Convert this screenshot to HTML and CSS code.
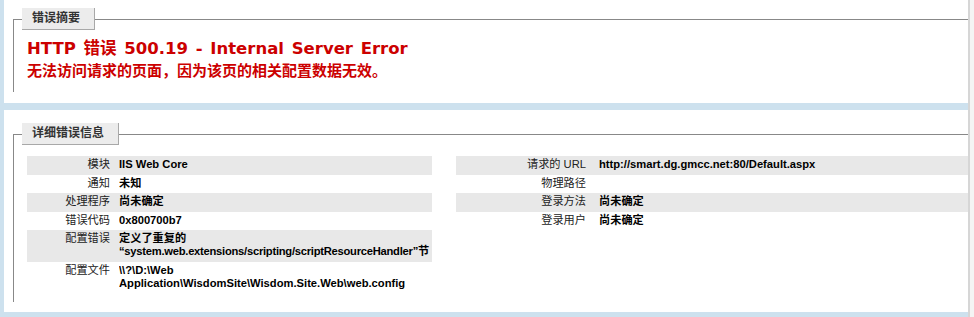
FILE: index.html
```html
<!DOCTYPE html>
<html lang="zh-CN">
<head>
  <meta charset="UTF-8" />
  <title>IIS 8.5 详细错误 - 500.19 - Internal Server Error</title>
  <meta name="viewport" content="width=device-width, initial-scale=1.0" />
  <link rel="stylesheet" href="styles.css">
</head>
<body>
  <!-- 错误摘要 -->
  <div class="box summary">
    <fieldset>
      <legend>错误摘要</legend>
      <h2>HTTP 错误 500.19 - Internal Server Error</h2>
      <h3>无法访问请求的页面，因为该页的相关配置数据无效。</h3>
    </fieldset>
  </div>

  <!-- 详细错误信息 -->
  <div class="box details">
    <fieldset>
      <legend>详细错误信息</legend>
      <div class="columns">
        <div class="col-left">
          <table>
            <tr class="alt"><th>模块</th><td>IIS Web Core</td></tr>
            <tr><th>通知</th><td>未知</td></tr>
            <tr class="alt"><th>处理程序</th><td>尚未确定</td></tr>
            <tr><th>错误代码</th><td>0x800700b7</td></tr>
            <tr class="alt"><th>配置错误</th><td>定义了重复的<br><span class="long">“system.web.extensions/scripting/scriptResourceHandler”节</span></td></tr>
            <tr><th>配置文件</th><td>\\?\D:\Web Application\WisdomSite\Wisdom.Site.Web\web.config</td></tr>
          </table>
        </div>
        <div class="col-right">
          <table>
            <tr class="alt"><th>请求的 URL</th><td>http://smart.dg.gmcc.net:80/Default.aspx</td></tr>
            <tr><th>物理路径</th><td></td></tr>
            <tr class="alt"><th>登录方法</th><td>尚未确定</td></tr>
            <tr><th>登录用户</th><td>尚未确定</td></tr>
          </table>
        </div>
      </div>
    </fieldset>
  </div>
</body>
</html>
```

FILE: styles.css
```css
* {
  box-sizing: border-box;
}

html {
  background-color: #f4f4f4;
  overflow: hidden;
}

body {
  margin: 0 4px 0 0;
  padding: 0 0 5px 4px;
  background-color: #cde1ee;
  border-right: 2px solid #d6d6d6;
  font-family: "Liberation Sans", "Noto Sans CJK SC", sans-serif;
  font-size: 11.2px;
  color: #000;
}

.box {
  background-color: #fff;
}

.summary {
  padding: 8px 0 11px 0;
}

.details {
  margin-top: 7px;
  padding: 13px 0 10px 0;
}

fieldset {
  margin: 0 0 0 9px;
  padding: 7px 0 11px 13px;
  min-width: 0;
  border: none;
  border-top: 1px solid #888;
  border-left: 1px solid #888;
}

.details fieldset {
  padding: 11px 0 9px 13px;
}

legend {
  margin-left: -5px;
  padding: 3px 14px 4px 10px;
  line-height: 14px;
  font-size: 12px;
  font-weight: bold;
  color: #333;
  background-color: #ececec;
  border-right: 1px solid #a8a8a8;
  border-bottom: 1px solid #a8a8a8;
}

h2 {
  margin: 0;
  font-family: "DejaVu Sans", "Noto Sans CJK SC", sans-serif;
  font-size: 16.5px;
  line-height: 24px;
  word-spacing: 2px;
  color: #c00;
}

h3 {
  margin: 0;
  font-size: 15px;
  line-height: 20px;
  color: #c00;
}

.columns {
  display: flex;
}

.col-left {
  width: 405px;
  margin-right: 24px;
  overflow: hidden;
}

.col-right {
  flex: 1;
}

table {
  width: 100%;
  border-collapse: collapse;
  table-layout: fixed;
}

th,
td {
  padding: 2px 0 3.5px 0;
  line-height: 13px;
  vertical-align: top;
  text-align: left;
}

th {
  width: 92px;
  padding-right: 9px;
  text-align: right;
  font-weight: normal;
  color: #222;
}

.col-right th {
  width: 143px;
  padding-right: 13px;
}

td {
  font-weight: bold;
  overflow: hidden;
}

tr.alt th,
tr.alt td {
  background-color: #e8e8e8;
}

.long {
  white-space: nowrap;
  letter-spacing: -0.25px;
}
```
